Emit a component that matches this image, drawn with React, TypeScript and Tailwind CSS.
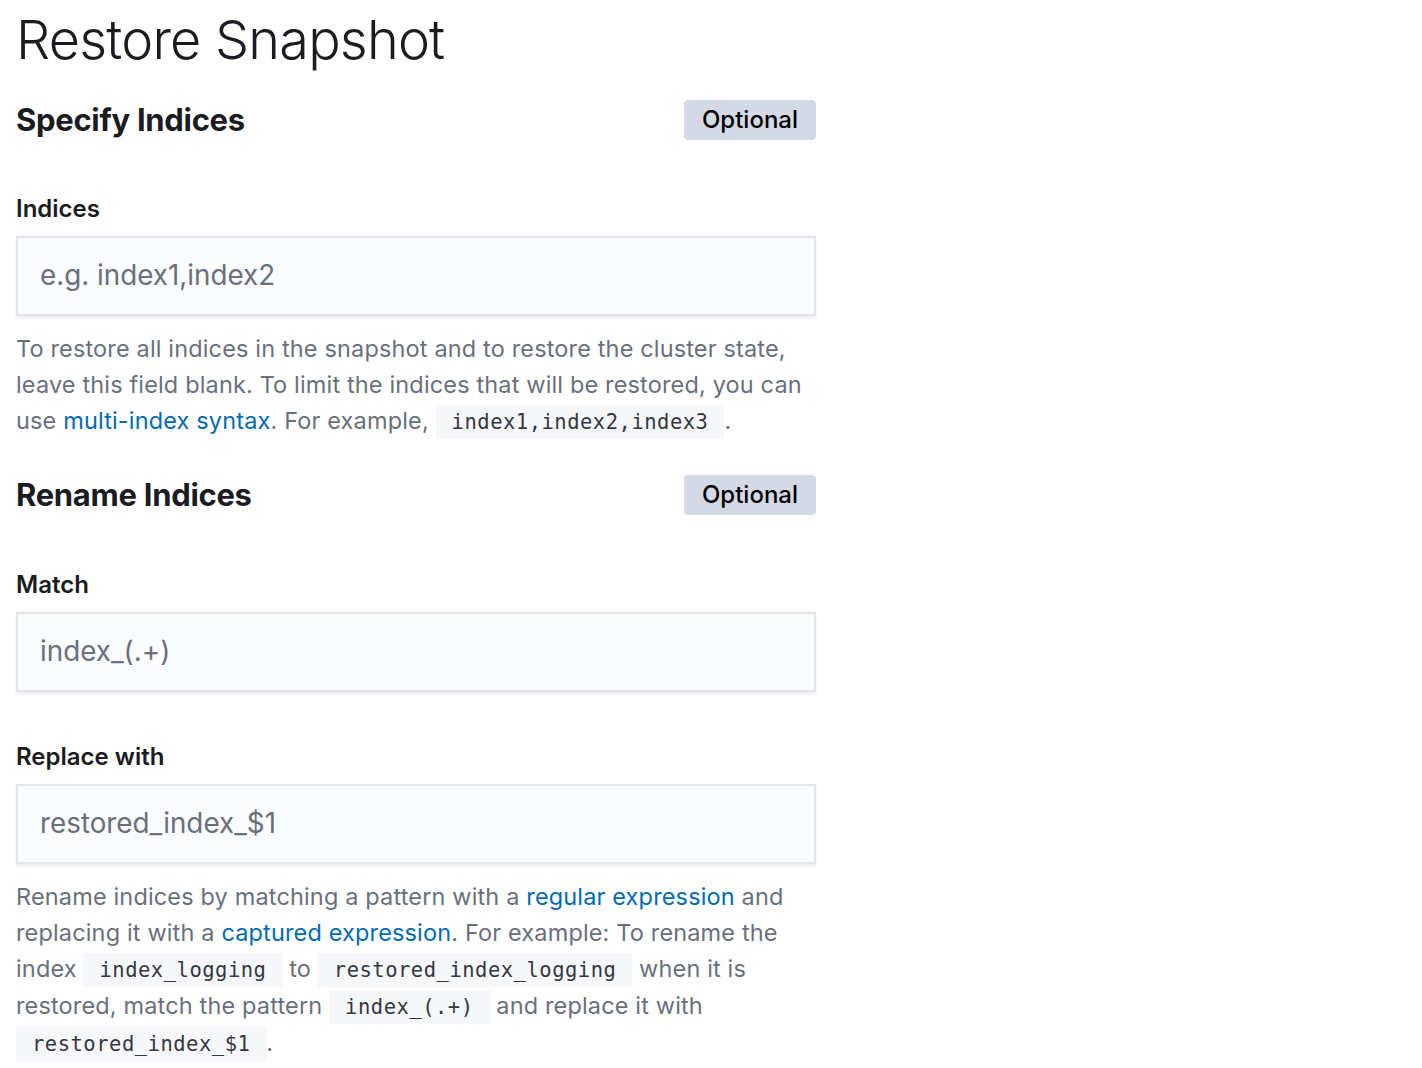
import { FunctionComponent, ReactNode } from 'react'

const Code: FunctionComponent<{ children: ReactNode }> = ({ children }) => (
  <code className="bg-[#f5f7fa] text-[#343741] px-[16px] py-[5px] font-['DejaVu_Sans_Mono',monospace] text-[20.5px] tracking-[0.5px]">
    {children}
  </code>
)

const Link: FunctionComponent<{ children: ReactNode }> = ({ children }) => (
  <a href="#" className="text-[#006bb4]">
    {children}
  </a>
)

const SectionHeader: FunctionComponent<{ title: string }> = ({ title }) => (
  <div className="flex items-center justify-between h-10">
    <h2 className="text-[31px] font-bold tracking-[-0.3px] text-[#1a1c21]">{title}</h2>
    <span className="h-10 px-[18px] flex items-center rounded-[4px] bg-[#d3dae6] text-[24px] font-medium text-black">
      Optional
    </span>
  </div>
)

const Field: FunctionComponent<{ label: string; placeholder: string }> = ({
  label,
  placeholder,
}) => (
  <div>
    <label className="block text-[24px] font-semibold leading-[32px] text-[#1a1c21]">
      {label}
    </label>
    <div className="mt-[11px] h-20 bg-[#fbfcfd] border-2 border-[#e3e5ea] shadow-[0_2px_3px_rgba(0,0,0,0.08)] flex items-center px-[22px] text-[27.8px] text-[#69707d]">
      {placeholder}
    </div>
  </div>
)

export default function App() {
  return (
    <div className="min-h-screen bg-white font-['Inter',sans-serif]">
      <div className="w-[800px] ml-4">
        <h1 className="text-[54px] font-light leading-[80px] tracking-[-0.8px] text-[#1a1c21]">
          Restore Snapshot
        </h1>
        <div className="mt-[20px]">
          <SectionHeader title="Specify Indices" />
        </div>
        <div className="mt-[53px]">
          <Field label="Indices" placeholder="e.g. index1,index2" />
        </div>
        <p className="mt-[15px] text-[23.5px] leading-[36px] text-[#69707d] tracking-[0.15px]">
          To restore all indices in the snapshot and to restore the cluster state, leave this
          field blank. To limit the indices that will be restored, you can use{' '}
          <Link>multi-index syntax</Link>. For example, <Code>index1,index2,index3</Code>.
        </p>
        <div className="mt-[35px]">
          <SectionHeader title="Rename Indices" />
        </div>
        <div className="mt-[54px]">
          <Field label="Match" placeholder="index_(.+)" />
        </div>
        <div className="mt-[49px]">
          <Field label="Replace with" placeholder="restored_index_$1" />
        </div>
        <p className="mt-[15px] text-[23.5px] leading-[36px] text-[#69707d] tracking-[0.15px]">
          Rename indices by matching a pattern with a <Link>regular expression</Link> and
          replacing it with a <Link>captured expression</Link>. For example: To rename the index{' '}
          <Code>index_logging</Code> to <Code>restored_index_logging</Code> when it is restored,
          match the pattern <Code>index_(.+)</Code> and replace it with{' '}
          <Code>restored_index_$1</Code>.
        </p>
      </div>
    </div>
  )
}
